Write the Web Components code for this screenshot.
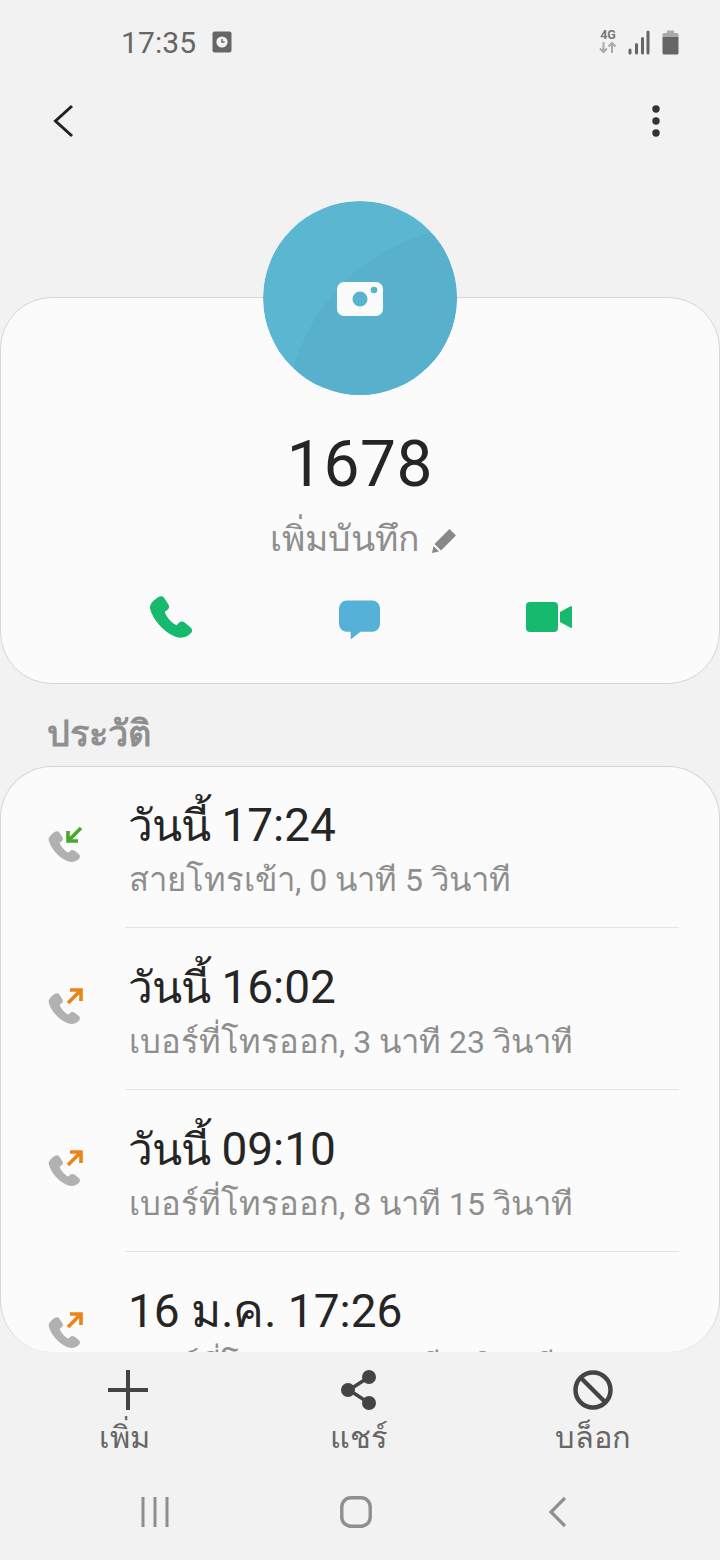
<!DOCTYPE html>
<html lang="th"><head><meta charset="utf-8"><style>
html,body{margin:0;padding:0;background:#f2f2f2}
body{width:720px;height:1560px;overflow:hidden;font-family:Roboto,sans-serif}
</style></head><body>
<contact-page>
  <status-bar slot="status"></status-bar>
  <app-bar slot="bar"></app-bar>
  <profile-card slot="profile" name="1678" note="เพิ่มบันทึก"></profile-card>
  <history-list slot="history" heading="ประวัติ">
    <call-row kind="in" when="วันนี้ 17:24" detail="สายโทรเข้า, 0 นาที 5 วินาที"></call-row>
    <call-row kind="out" when="วันนี้ 16:02" detail="เบอร์ที่โทรออก, 3 นาที 23 วินาที"></call-row>
    <call-row kind="out" when="วันนี้ 09:10" detail="เบอร์ที่โทรออก, 8 นาที 15 วินาที"></call-row>
    <call-row kind="out" when="16 ม.ค. 17:26" detail="เบอร์ที่โทรออก, 2 นาที 8 วินาที" last></call-row>
  </history-list>
  <action-bar slot="actions"></action-bar>
  <nav-bar slot="nav"></nav-bar>
</contact-page>
<script>
const def=(name,html)=>customElements.define(name,class extends HTMLElement{
  connectedCallback(){ if(this.shadowRoot) return;
    const r=this.attachShadow({mode:'open'});
    r.innerHTML=typeof html==='function'?html(this):html;
  }});
const th=s=>s.replace(/[\u0E00-\u0E7F.]*[\u0E00-\u0E7F][\u0E00-\u0E7F.]*/g,m=>`<span class="th">${m}</span>`);
const TH='.th{font-size:1.06em;line-height:1}';
const PHONE='M5.2 0.6 C6.3 -0.2 7.6 0 8.3 1.1 L10.6 4.6 C11.3 5.7 11 6.9 10 7.6 L8.6 8.6 C9.2 11 12 14.6 15 15.9 L16.2 14.7 C17.1 13.8 18.4 13.6 19.4 14.4 L22.6 17 C23.6 17.8 23.8 19.2 22.9 20.2 C20.8 22.6 17.6 23.4 14.4 22.2 C7.6 19.6 1.8 12.4 0.6 7 C0 4.4 2.8 2.2 5.2 0.6 Z';
def('contact-page',`<style>:host{display:flex;flex-direction:column;width:720px;height:1560px;overflow:hidden}</style>
<slot name="status"></slot><slot name="bar"></slot><slot name="profile"></slot><slot name="history"></slot><slot name="actions"></slot><slot name="nav"></slot>`);
def('status-bar',`<style>:host{display:flex;align-items:center;height:84px;padding:0 41px 0 121px;box-sizing:border-box;color:#666;font-size:30px;flex:none}
.t{letter-spacing:.1px}.c{margin-left:16px;display:block}.s{flex:1}svg{display:block}
.g{position:relative;width:18px;height:26px;margin-right:11px;margin-left:-1px}
.g b{display:block;font:700 12.5px/12px Roboto,sans-serif;color:#777;text-align:center}
</style>
<span class="t">17:35</span>
<svg class="c" width="20" height="24" viewBox="0 0 20 24"><rect x="0.5" y="1.5" width="19" height="21" rx="2" fill="#666"/><circle cx="10" cy="12" r="5.6" fill="#f2f2f2"/><path d="M10 9v3h2.6" stroke="#666" stroke-width="1.4" fill="none"/></svg>
<span class="s"></span>
<span class="g"><b>4G</b><svg width="18" height="13" viewBox="0 0 18 13"><path d="M4.5 1v10M1 7.5l3.5 3.5L8 7.5M13 12V2M9.5 5.5L13 2l3.500 3.500" stroke="#aaa" stroke-width="2" fill="none"/></svg></span>
<svg width="22" height="26" viewBox="0 0 22 26" style="margin-right:12px"><g stroke="#666" stroke-width="3" stroke-linecap="round"><path d="M2 21v3M8.500 15.500V24M14.500 9.500V24M20 3V24"/></g></svg>
<svg width="17" height="26" viewBox="0 0 17 26"><path d="M5 1.500h7V4h-7z" fill="#aaa"/><path d="M2 4h13a1.500 1.500 0 0 1 1.500 1.500V8H.5V5.500A1.500 1.500 0 0 1 2 4z" fill="#aaa"/><path d="M.5 8h16v16a1.500 1.500 0 0 1-1.500 1.500H2A1.500 1.500 0 0 1 .5 24z" fill="#666"/></svg>`);
def('app-bar',`<style>:host{display:flex;justify-content:space-between;align-items:center;height:74px;padding:0 60px 0 52px;box-sizing:border-box;flex:none}svg{display:block}</style>
<svg width="24" height="34" viewBox="0 0 24 34"><path d="M20 2L3.500 17 20 32" fill="none" stroke="#222" stroke-width="3"/></svg>
<svg width="8" height="32" viewBox="0 0 8 32"><circle cx="4" cy="4" r="3.700" fill="#333"/><circle cx="4" cy="16" r="3.700" fill="#333"/><circle cx="4" cy="28" r="3.700" fill="#333"/></svg>`);
def('profile-card',h=>`<style>:host{display:block;position:relative;margin-top:139px;flex:none}
.card{box-sizing:border-box;height:387px;background:#fbfbfb;border:1px solid #d6d6d6;border-radius:52px;display:flex;flex-direction:column;align-items:center;padding-top:129px}
.av{position:absolute;left:263px;top:-96px;width:194px;height:194px;border-radius:50%;display:block}
.name{font-size:64px;line-height:76px;color:#252525;letter-spacing:.6px}
.note{display:flex;align-items:center;gap:13px;font-size:33px;line-height:46px;color:#8e8e8e;margin-top:14px;padding-left:7px}
.note .th{font-size:1.075em}
.acts{display:grid;grid-template-columns:repeat(3,1fr);width:100%;box-sizing:border-box;padding:0 75px;margin-top:33px;justify-items:center}
svg{display:block}${TH}</style>
<svg class="av" viewBox="0 0 194 194"><defs><clipPath id="c"><circle cx="97" cy="97" r="97"/></clipPath></defs><circle cx="97" cy="97" r="97" fill="#5bb7d1"/><path clip-path="url(#c)" d="M30 168C50 100 100 50 167 32L200 40V200H20z" fill="#57b0cc"/>
<rect x="74" y="81" width="46" height="34" rx="7" fill="#fbfbfb"/><circle cx="97" cy="98" r="7.500" fill="#58b3cf"/><circle cx="111" cy="89" r="3.300" fill="#58b3cf"/></svg>
<div class="card"><div class="name">${h.getAttribute('name')}</div>
<div class="note"><span>${th(h.getAttribute('note'))}</span><svg width="25" height="25" viewBox="0 0 25 25"><path d="M17.500 1L24 7.500 9 22.500 2.500 16zM1.500 18L7 23.500 0 25z" fill="#888"/></svg></div>
<div class="acts">
<svg width="44" height="44" viewBox="0 0 24 24"><path d="${PHONE}" fill="#16b96d"/></svg>
<svg width="41" height="41" viewBox="0 0 42 41" style="margin-top:4px"><path d="M8 0h26a8 8 0 0 1 8 8v16a8 8 0 0 1-8 8H22L12 40v-8H8a8 8 0 0 1-8-8V8a8 8 0 0 1 8-8z" fill="#56b1d8"/></svg>
<svg width="46" height="30" viewBox="0 0 46 30" style="margin-top:6px"><path d="M4 0h24a4 4 0 0 1 4 4v22a4 4 0 0 1-4 4H4a4 4 0 0 1-4-4V4a4 4 0 0 1 4-4zM34 10l11-6q1 0 1 1v20q0 1-1 1l-11-6z" fill="#16b96d"/></svg>
</div></div>`);
def('history-list',h=>`<style>:host{display:flex;flex-direction:column;flex:1;min-height:0}
h2{margin:0;font-size:34px;line-height:100px;height:82px;font-weight:700;color:#8f8f8f;padding-left:47px;box-sizing:border-box;flex:none}
.card{flex:1;min-height:0;overflow:hidden;background:#fbfbfb;border:1px solid #d6d6d6;border-bottom:none;border-radius:52px;display:flex;flex-direction:column}
::slotted(call-row:first-child){margin-top:-1px}${TH}</style>
<h2>${th(h.getAttribute('heading'))}</h2><div class="card"><slot></slot></div>`);
def('call-row',h=>{const inn=h.getAttribute('kind')==='in',w=h.getAttribute('when');return `<style>:host{display:grid;grid-template-columns:124px 1fr;height:162px;flex:none;box-sizing:border-box;padding-right:40px}
.ic{position:relative;display:block;margin:60px 0 0 47px}
.tx{padding:32px 0 0 3px;border-bottom:${h.hasAttribute('last')?'0':'1px solid #e4e4e4'};height:162px;box-sizing:border-box}
.w{font-size:46px;line-height:54px;color:#252525}.w .th{font-size:${w.includes('.')?'1em':'.96em'};letter-spacing:${w.includes('.')?'0':'-1px'};line-height:1}
.d{font-size:32px;line-height:56px;color:#8e8e8e;white-space:nowrap;margin-left:1px}.d .th{font-size:1.025em;line-height:1}
</style><svg class="ic" width="36" height="36" viewBox="0 0 36 36"><g transform="translate(0 5) scale(1.36)"><path d="${PHONE}" fill="#b0b1b3"/></g>
${inn?'<path d="M33 2L21 14M20 5v10h10" stroke="#4aa72e" stroke-width="3.600" fill="none"/>':'<path d="M20 15L32 3M22 2h11v11" stroke="#ea8419" stroke-width="3.600" fill="none"/>'}</svg>
<div class="tx"><div class="w">${th(w)}</div><div class="d">${th(h.getAttribute('detail'))}</div></div>`});
def('action-bar',`<style>:host{display:grid;grid-template-columns:repeat(3,1fr);height:108px;flex:none;padding:0 7px 0 6px;box-sizing:border-box}
.a{display:flex;flex-direction:column;align-items:center;padding-top:18px;font-size:29px;line-height:52px;color:#666}
.a:first-child{transform:translateX(5px)}.a:nth-child(2){transform:translateX(1px)}.a:last-child{transform:translateX(-2px)}
.a svg{display:block;height:40px;margin-bottom:13px}.a:first-child svg{transform:translateX(-3px)}.a:nth-child(2) svg{transform:translateX(3px)}${TH}</style>
<div class="a"><svg width="40" height="40" viewBox="0 0 40 40"><path d="M20 0v40M0 20h40" stroke="#444" stroke-width="4"/></svg><span class="th">เพิ่ม</span></div>
<div class="a"><svg width="36" height="40" viewBox="0 0 36 40"><path d="M28 7L8 20l20 13" stroke="#444" stroke-width="3.500" fill="none"/><circle cx="28" cy="7" r="7" fill="#444"/><circle cx="7" cy="20" r="7" fill="#444"/><circle cx="28" cy="33" r="7" fill="#444"/></svg><span class="th">แชร์</span></div>
<div class="a"><svg width="40" height="40" viewBox="0 0 40 40"><circle cx="20" cy="20" r="17.500" fill="none" stroke="#444" stroke-width="4.500"/><path d="M8 8l24 24" stroke="#444" stroke-width="4.500"/></svg><span class="th">บล็อก</span></div>`);
def('nav-bar',`<style>:host{display:grid;grid-template-columns:repeat(3,201px);justify-content:center;height:100px;flex:none;align-items:start;justify-items:center;margin-left:-8px}svg{display:block;margin-top:37px}</style>
<svg width="30" height="30" viewBox="0 0 30 30"><path d="M3 0v30M15 0v30M27 0v30" stroke="#8f8f8f" stroke-width="3"/></svg>
<svg width="32" height="32" viewBox="0 0 32 32" style="margin-top:36px"><rect x="1.800" y="1.800" width="28.400" height="28.400" rx="9" fill="none" stroke="#8f8f8f" stroke-width="3.400"/></svg>
<svg width="18" height="32" viewBox="0 0 18 32" style="margin-top:36px"><path d="M17 2L3 16l14 14" fill="none" stroke="#8f8f8f" stroke-width="3.200"/></svg>`);
</script>
</body></html>
